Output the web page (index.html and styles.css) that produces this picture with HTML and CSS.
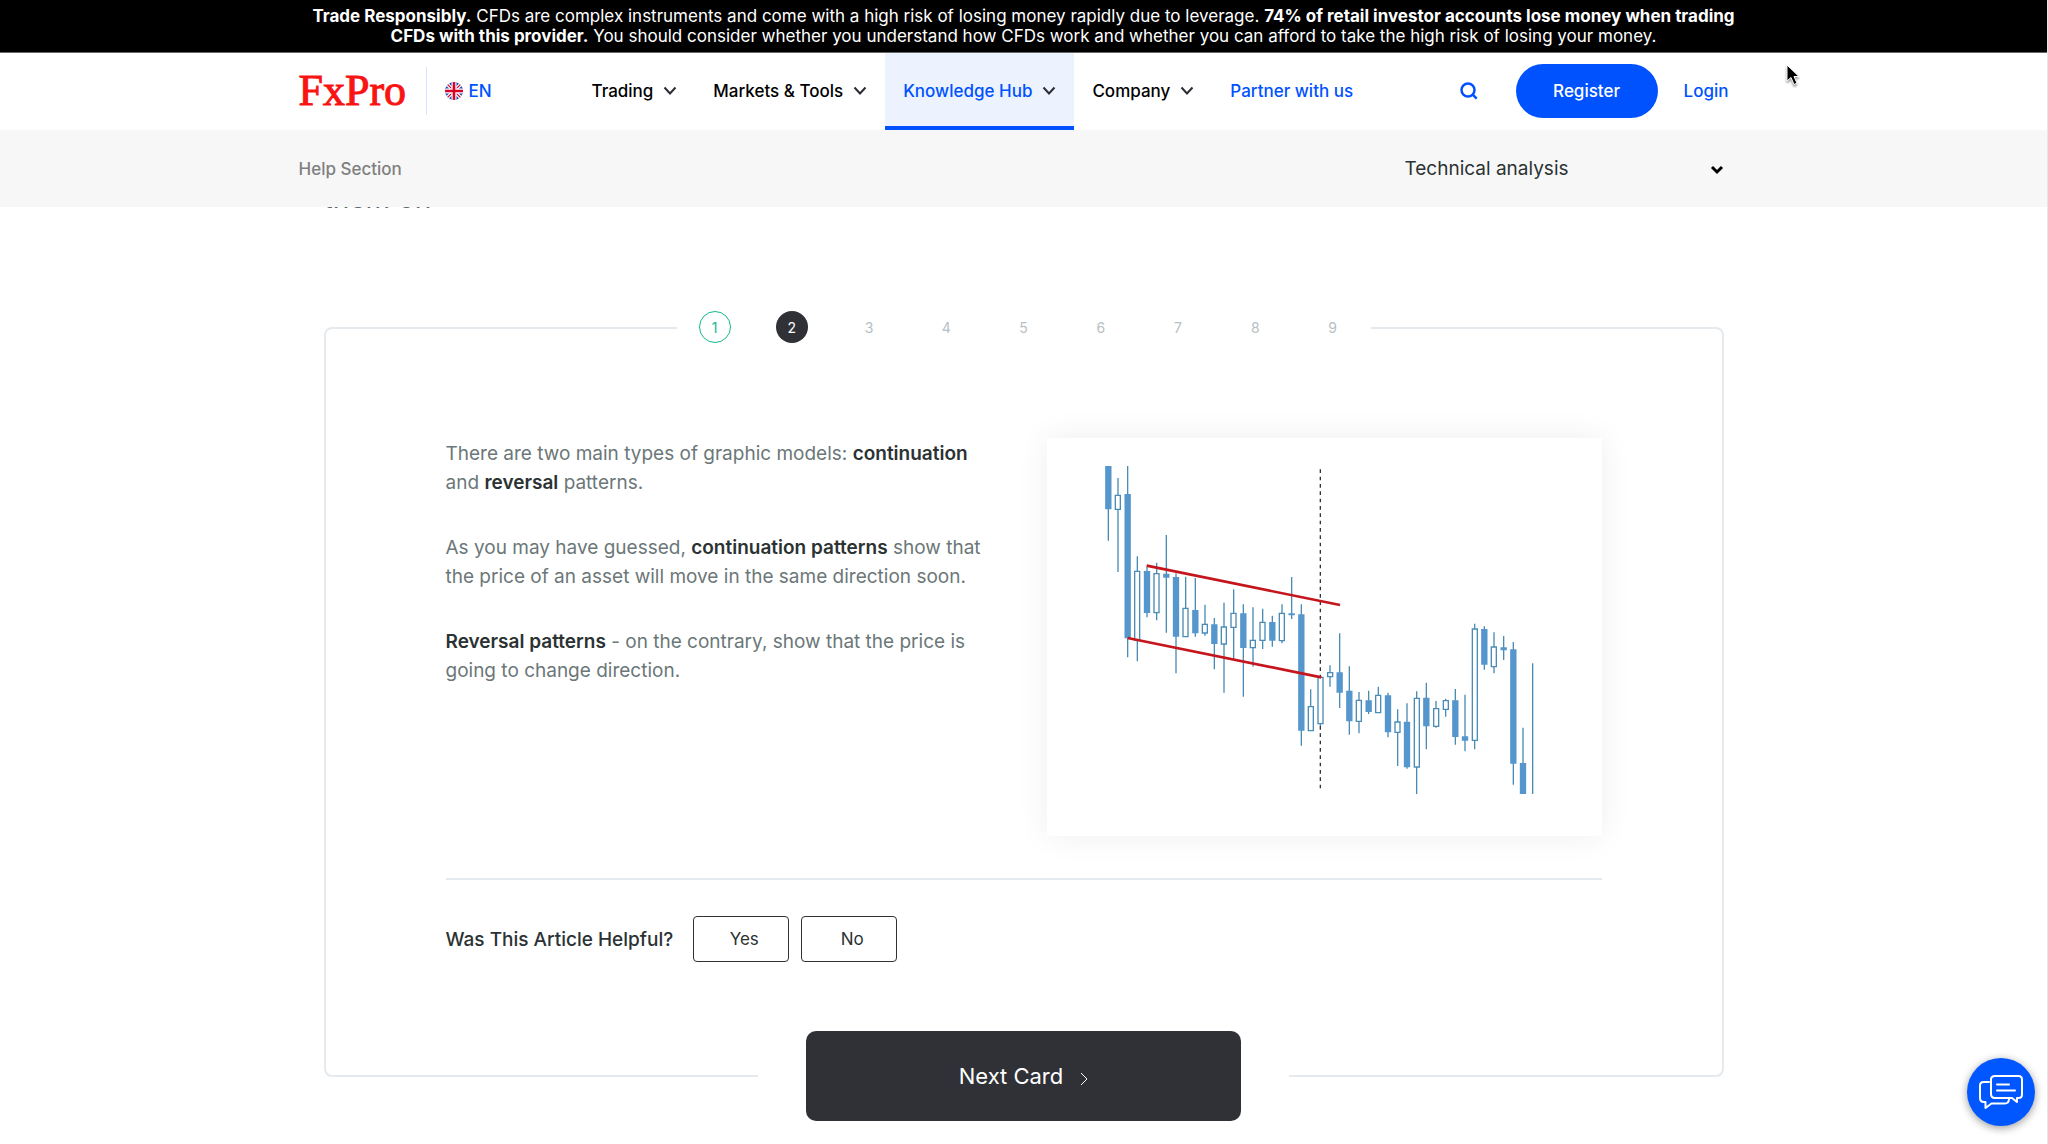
FILE: index.html
```html
<!DOCTYPE html>
<html lang="en">
<head>
<meta charset="utf-8">
<meta name="viewport" content="width=device-width, initial-scale=1">
<title>Technical analysis - FxPro Help Section</title>
<link rel="stylesheet" href="styles.css">
</head>
<body>
<div class="top">
  <div class="risk">
    <p class="risk-text"><strong>Trade Responsibly.</strong> CFDs are complex instruments and come with a high risk of losing money rapidly due to leverage. <strong>74% of retail investor accounts lose money when trading<br>CFDs with this provider.</strong> You should consider whether you understand how CFDs work and whether you can afford to take the high risk of losing your money.</p>
  </div>
  <header class="header">
    <div class="wrap header-row">
      <a class="logo" href="#">FxPro</a>
      <a class="lang" href="#">
        <svg class="flag" viewBox="0 0 18 18" aria-hidden="true">
          <clipPath id="round"><circle cx="9" cy="9" r="9"/></clipPath>
          <g clip-path="url(#round)">
            <path fill="#1b4fb5" d="M0 0h18v18H0z"/>
            <path stroke="#fff" stroke-width="3.4" d="M0 0l18 18M18 0L0 18"/>
            <path stroke="#d80027" stroke-width="1.2" d="M0 0l18 18M18 0L0 18"/>
            <path stroke="#fff" stroke-width="5" d="M9 0v18M0 9h18"/>
            <path stroke="#d80027" stroke-width="2.6" d="M9 0v18M0 9h18"/>
          </g>
        </svg>EN</a>
      <nav class="nav">
        <a class="nav-item" href="#">Trading <svg class="chev" viewBox="0 0 14 9"><path d="M1.500 1.500L7 7.500l5.500-6"/></svg></a>
        <a class="nav-item" href="#">Markets &amp; Tools <svg class="chev" viewBox="0 0 14 9"><path d="M1.500 1.500L7 7.500l5.500-6"/></svg></a>
        <a class="nav-item active" href="#">Knowledge Hub <svg class="chev" viewBox="0 0 14 9"><path d="M1.500 1.500L7 7.500l5.500-6"/></svg></a>
        <a class="nav-item" href="#">Company <svg class="chev" viewBox="0 0 14 9"><path d="M1.500 1.500L7 7.500l5.500-6"/></svg></a>
        <a class="nav-item partner" href="#">Partner with us</a>
      </nav>
      <div class="account">
        <button class="search" type="button" aria-label="Search"><svg viewBox="0 0 18 18"><circle cx="8" cy="8" r="6.500"/><path d="M12.700 12.700l4 4"/></svg></button>
        <button class="register" type="button">Register</button>
        <a class="login" href="#">Login</a>
      </div>
    </div>
  </header>
  <div class="sub">
    <div class="wrap sub-row">
      <a class="crumb" href="#">Help Section</a>
      <div class="picker">
        <select class="topic" aria-label="Topic"><option>Technical analysis</option></select>
        <svg class="picker-chev" viewBox="0 0 14 10"><path d="M2 2l5 5 5-5"/></svg>
      </div>
    </div>
  </div>
</div>

<main class="main">
  <p class="lead">them on</p>
  <section class="card">
    <ol class="steps">
      <li><button class="step done" type="button">1</button></li>
      <li><button class="step current" type="button">2</button></li>
      <li><button class="step" type="button">3</button></li>
      <li><button class="step" type="button">4</button></li>
      <li><button class="step" type="button">5</button></li>
      <li><button class="step" type="button">6</button></li>
      <li><button class="step" type="button">7</button></li>
      <li><button class="step" type="button">8</button></li>
      <li><button class="step" type="button">9</button></li>
    </ol>
    <div class="body">
      <div class="article">
        <div class="copy">
          <p>There are two main types of graphic models: <strong>continuation</strong> and <strong>reversal</strong> patterns.</p>
          <p>As you may have guessed, <strong>continuation patterns</strong> show that the price of an asset will move in the same direction soon.</p>
          <p><strong>Reversal patterns</strong> - on the contrary, show that the price is going to change direction.</p>
        </div>
        <div class="figure">
          <svg class="chart" viewBox="0 0 1665 1194" role="img" aria-label="Candlestick chart with a falling channel">
            <path class="split" d="M820 94V1062"/>
            <g transform="translate(99 36)">
              <path class="wick" d="M85 48V272M114 84V136M114 178V366M143 48V622M172 319V364M172 570V634M201 350V502M230 338V371M230 488V511M259 255V548M288 370V670M317 380V475M346 384V560M375 464V523M375 549V557M403 504V658M432 458V531M432 582V728M461 418V490M461 532V630M490 463V740M519 472V571M519 593V650M548 476V517M548 571V597M577 497V590M606 463V490M606 572V580M635 381V507M664 463V887M692 718V770M721 821V828M750 646V668M750 680V710M779 550V774M808 649V854M837 726V751M837 814V850M866 722V792"/>
              <path class="bar" d="M85 48V178M143 132V565M201 363V489M259 371V383M288 381V560M346 480V550M403 523V582M490 490V594M577 516V572M635 490V496M664 493V842M779 667V728M808 722V814M866 751V786"/>
              <path class="hollow" d="M106 136h15v42h-15zM164 364h15v206h-15zM222 371h15v117h-15zM309 475h15v85h-15zM367 523h15v26h-15zM424 531h15v51h-15zM453 490h15v42h-15zM511 571h15v22h-15zM540 517h15v54h-15zM598 490h15v82h-15zM685 770h15v72h-15zM714 682h15v139h-15zM743 668h15v12h-15zM829 751h15v63h-15z"/>
              <path class="trend" d="M200 347L780 465M143 564L724 682"/>
            </g>
            <g transform="translate(819 246)">
              <path class="wick" d="M175 500V526M204 518V652M233 568V606M233 637V738M261 550V746M290 514V535M290 741V822M319 488V688M348 543V566M348 619V623M377 536V542M377 568V590M406 507V674M435 524V694M464 311V327M464 661V688M493 319V449M522 337V381M522 440V460M551 348V420M580 366V794M609 623V822M638 430V822"/>
              <path class="bar" d="M204 526V637M261 605V742M319 533V619M406 541V651M435 649V662M493 327V434M551 382V391M580 388V731M609 729V822"/>
              <path class="hollow" d="M167 526h15v52h-15zM225 606h15v31h-15zM283 535h15v206h-15zM341 566h15v53h-15zM370 542h15v26h-15zM457 327h15v334h-15zM514 381h15v59h-15z"/>
            </g>
          </svg>
        </div>
      </div>
      <div class="feedback">
        <p class="question">Was This Article Helpful?</p>
        <button class="vote" type="button">Yes</button>
        <button class="vote" type="button">No</button>
      </div>
    </div>
    <div class="next-row">
      <button class="next" type="button">Next Card <svg viewBox="0 0 8 14"><path d="M1 1l6 6-6 6"/></svg></button>
    </div>
  </section>
</main>

<button class="chat" type="button" aria-label="Open chat">
  <svg viewBox="0 0 46 36">
    <path d="M11 8H5.500Q2 8 2 11.500V24q0 4 4 4h1.500v6l6-4.500H27q3.500 0 4-4"/>
    <path d="M17 2h23.500Q44 2 44 5.500V20.500Q44 24 40.500 24H39v4l-5-4H17q-4 0-4-4V5.500Q13 2 17 2z"/>
    <path d="M19 10.500h12M19 16.500h18"/>
  </svg>
</button>
<svg class="pointer" viewBox="0 0 14 22" aria-hidden="true"><path d="M1 1v16l4-3.500 3 7 3-1.300-3-6.700h5z"/></svg>
</body>
</html>
```
FILE: styles.css
```css
* { box-sizing: border-box; }
body {
  min-height: 100vh;
  margin: 0;
  border-right: 1px solid #e6e6e6;
  background: #fff;
  color: #2b3233;
  font-family: Inter, "Liberation Sans", sans-serif;
  font-size: 17px;
}
p, ol { margin: 0; padding: 0; }
a { color: inherit; text-decoration: none; }
button, select { font: inherit; color: inherit; cursor: pointer; }
svg { display: block; fill: none; }

.wrap { max-width: 1450px; margin: 0 auto; }
.top { position: sticky; top: 0; z-index: 2; }

.risk {
  padding: 6px 20px;
  background: #000;
  color: #fff;
  border-bottom: 1px solid #666;
}
.risk-text { line-height: 20px; text-align: center; }

.header { background: #fff; }
.header-row { display: flex; align-items: center; height: 77px; padding-right: 20px; }
.logo {
  width: 128px;
  margin-bottom: 2px;
  border-right: 1px solid #d6e4ff;
  color: #f91414;
  font: 44px/48px "Liberation Serif", serif;
  -webkit-text-stroke: 1px #f91414;
}
.lang { display: flex; align-items: center; gap: 6px; width: 147px; margin-bottom: 2px; padding-left: 18px; color: #0052ff; font-weight: 500; }
.flag { width: 18px; height: 18px; }
.nav { display: flex; align-self: stretch; }
.nav-item {
  display: flex;
  align-items: center;
  gap: 10px;
  padding: 2px 18px 0;
  border-bottom: 4px solid transparent;
  color: #000;
  font-weight: 500;
}
.nav-item.active { background: #ecf3ff; border-color: #0052ff; color: #0052ff; }
.nav-item.partner { color: #0052ff; }
.chev { width: 14px; height: 9px; stroke: #2b2d33; stroke-width: 2; }
.account { display: flex; align-items: center; margin: 0 0 2px auto; color: #0052ff; font-weight: 500; }
.search { width: 18px; height: 18px; margin-right: 38px; padding: 0; border: 0; background: none; }
.search svg { width: 18px; height: 18px; stroke: #0052ff; stroke-width: 2.5; }
.register { width: 142px; height: 54px; margin-right: 26px; border: 0; border-radius: 27px; background: #0052ff; color: #fff; font-weight: 500; }

.sub { background: #f7f7f7; }
.sub-row { display: flex; align-items: center; justify-content: space-between; height: 77px; }
.crumb { color: #808080; font-weight: 500; }
.picker { display: grid; align-items: center; width: 344px; padding-right: 25px; }
.topic, .picker-chev { grid-area: 1 / 1; }
.topic { appearance: none; height: 40px; padding: 0; border: 0; background: none; font-size: 19px; }
.picker-chev { justify-self: end; width: 14px; height: 10px; margin-top: 2px; stroke: #000; stroke-width: 3; pointer-events: none; }

.main { max-width: 1400px; margin: 0 auto; padding-bottom: 66px; }
.lead { margin-top: -30px; padding-bottom: 108px; color: #5b6869; font-size: 28px; line-height: 42px; }

.card { border: 2px solid #e4eaed; border-radius: 8px; }
.steps {
  display: flex;
  justify-content: space-between;
  width: 694px;
  margin: -18px auto 0;
  padding: 0 22px;
  background: #fff;
  list-style: none;
}
.step { display: block; width: 32px; height: 32px; padding: 0; border: 1px solid transparent; border-radius: 50%; background: none; color: #b6c0c3; font-size: 14px; }
.step.done { border-color: #14b88f; color: #14b88f; }
.step.current { background: #303136; color: #fff; }
.body { padding: 95px 120px 69px; }
.article { display: flex; justify-content: space-between; padding-bottom: 42px; border-bottom: 2px solid #e4eaed; }
.copy { display: flex; flex-direction: column; gap: 36px; width: 556px; padding-top: 1px; color: #6b7778; font-size: 19px; line-height: 29px; }
.copy strong { color: #2b3233; font-weight: 600; }
.figure { width: 555px; background: #fff; box-shadow: 0 0 30px rgba(0, 0, 0, .07); }
.chart { width: 100%; }
.split { stroke: #333; stroke-width: 4; stroke-dasharray: 11 11; }
.wick { stroke: #4a8cb5; stroke-width: 4; }
.bar { stroke: #5596cc; stroke-width: 19; }
.hollow { fill: #fff; stroke: #4a8cb5; stroke-width: 4; }
.trend { stroke: #c4161c; stroke-width: 8; }
.feedback { display: flex; align-items: center; gap: 12px; padding-top: 36px; }
.question { margin-right: 8px; font-size: 19px; font-weight: 500; }
.vote { width: 96px; height: 46px; padding: 0 0 0 6px; border: 1px solid #303136; border-radius: 4px; background: #fff; }
.next-row { display: flex; justify-content: center; width: 531px; margin: 0 auto -46px; background: #fff; }
.next {
  display: flex;
  align-items: center;
  justify-content: center;
  gap: 17px;
  width: 435px;
  height: 90px;
  border: 0;
  border-radius: 10px;
  background: #303136;
  color: #fff;
  font-size: 22px;
}
.next svg { width: 8px; height: 14px; margin-top: 5px; stroke: #fff; stroke-width: 1; }

.chat {
  position: fixed;
  right: 13px;
  bottom: 18px;
  display: grid;
  place-items: center;
  width: 68px;
  height: 68px;
  padding: 0;
  border: 0;
  border-radius: 50%;
  background: #0057ff;
  box-shadow: 0 2px 8px rgba(0, 0, 0, .4);
}
.chat svg { width: 46px; height: 36px; stroke: #fff; stroke-width: 2; stroke-linejoin: round; stroke-linecap: round; }
.chat path:nth-child(2) { fill: #0057ff; }
.pointer { position: fixed; z-index: 3; top: 64px; left: 1786px; width: 14px; height: 22px; fill: #000; stroke: #fff; stroke-width: 1; filter: drop-shadow(0 2px 1px rgba(0, 0, 0, .4)); }
```
